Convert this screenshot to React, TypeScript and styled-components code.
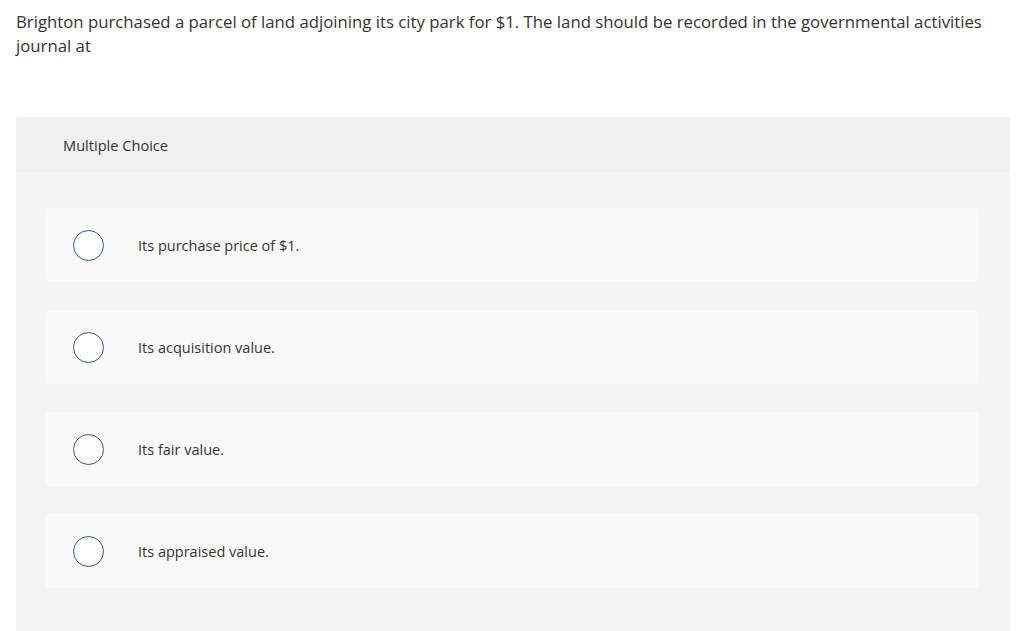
import React from 'react'
import styled, { createGlobalStyle } from 'styled-components'

const GlobalStyle = createGlobalStyle`
  html, body {
    margin: 0;
    padding: 0;
    background: #fff;
    font-family: 'Open Sans', 'Liberation Sans', sans-serif;
    color: #333;
  }
`

const Page = styled.div`
  padding: 10px 14px 0 16px;
`

const Question = styled.p`
  margin: 0;
  font-size: 16.75px;
  line-height: 24px;
  color: #333;
`

const Panel = styled.section`
  margin-top: 59px;
  background: #f4f4f4;
  border-radius: 3px 3px 0 0;
  overflow: hidden;
`

const PanelHeader = styled.div`
  height: 55px;
  display: flex;
  align-items: center;
  padding-left: 47px;
  background: #f0f0f0;
  font-size: 14.6px;
  color: #333;
`

const OptionList = styled.div`
  display: flex;
  flex-direction: column;
  gap: 28px;
  padding: 36px 31px 60px 29px;
`

const Option = styled.label`
  height: 74px;
  display: flex;
  align-items: center;
  padding-left: 28px;
  background: #fafafa;
  border-radius: 4px;
  cursor: pointer;
`

const Radio = styled.span`
  width: 31px;
  height: 31px;
  box-sizing: border-box;
  border: 1.5px solid #2c5a93;
  border-radius: 50%;
  background: #fff;
  flex-shrink: 0;
`

const OptionText = styled.span`
  margin-left: 34px;
  font-size: 14.5px;
  color: #333;
`

const choices = [
  'Its purchase price of $1.',
  'Its acquisition value.',
  'Its fair value.',
  'Its appraised value.',
]

export default function App() {
  return (
    <>
      <GlobalStyle />
      <Page>
        <Question>
          Brighton purchased a parcel of land adjoining its city park for $1. The land should be recorded in the governmental activities journal at
        </Question>
        <Panel>
          <PanelHeader>Multiple Choice</PanelHeader>
          <OptionList>
            {choices.map((c) => (
              <Option key={c}>
                <Radio />
                <OptionText>{c}</OptionText>
              </Option>
            ))}
          </OptionList>
        </Panel>
      </Page>
    </>
  )
}
